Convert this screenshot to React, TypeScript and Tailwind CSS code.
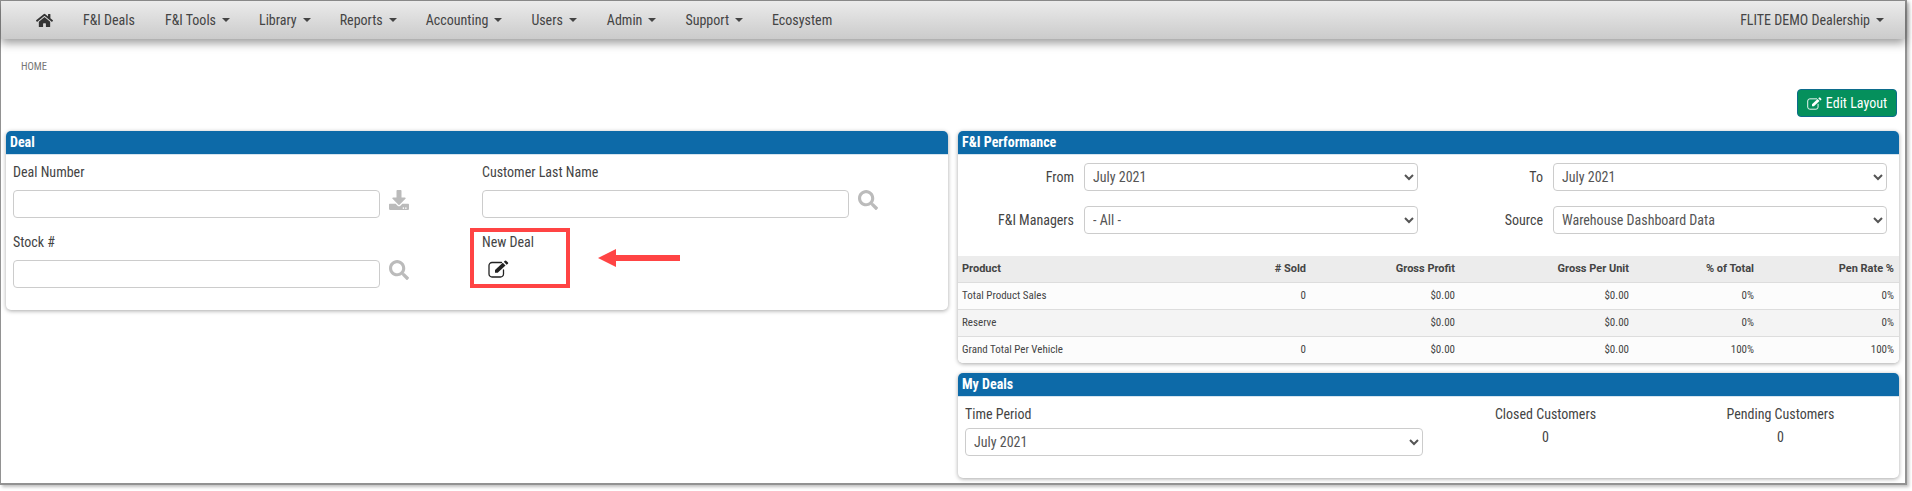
import { FaDownload, FaHome, FaSearch } from "react-icons/fa";

const navItems = [
  { label: "F&I Deals", caret: false, className: "ml-[30px]" },
  { label: "F&I Tools", caret: true, className: "ml-[30px]" },
  { label: "Library", caret: true, className: "ml-[29px]" },
  { label: "Reports", caret: true, className: "ml-[29px]" },
  { label: "Accounting", caret: true, className: "ml-[29px]" },
  { label: "Users", caret: true, className: "ml-[29px]" },
  { label: "Admin", caret: true, className: "ml-[30px]" },
  { label: "Support", caret: true, className: "ml-[29px]" },
  { label: "Ecosystem", caret: false, className: "ml-[29px]" },
];

const rows = [
  ["Total Product Sales", "0", "$0.00", "$0.00", "0%", "0%"],
  ["Reserve", "", "$0.00", "$0.00", "0%", "0%"],
  ["Grand Total Per Vehicle", "0", "$0.00", "$0.00", "100%", "100%"],
];

const tableCols = "grid grid-cols-[208px_145px_149px_174px_125px_140px] items-center";

// pencil-square outline: hollow box with a solid pencil across the corner
function EditIcon({ className }: { className?: string }) {
  return (
    <svg className={className} viewBox="0 0 21 18" fill="none">
      <path d="M15.5 10V14a3 3 0 0 1-3 3H4a3 3 0 0 1-3-3V5.500a3 3 0 0 1 3-3h9.500" stroke="currentColor" strokeWidth="1.3" strokeLinecap="round" />
      <path d="M7 10 14.800 2.700 17.500 5.400 9.700 12.800H7Z" fill="currentColor" />
      <path d="M15.800 1.800 17 0.700a0.900 0.900 0 0 1 1.200 0L20 2.500a0.900 0.900 0 0 1 0 1.200L18.600 4.700Z" fill="currentColor" />
    </svg>
  );
}

function Caret() {
  return <span className="ml-[6px] inline-block border-x-[4px] border-t-[4px] border-x-transparent border-t-[#444]" />;
}

function Card({ title, children, className }: { title: string; children: React.ReactNode; className?: string }) {
  return (
    <section className={`overflow-hidden rounded-[5px] bg-white shadow-[0_1px_4px_rgba(0,0,0,0.35)] ${className ?? ""}`}>
      <h2 className="h-[24px] border-b border-[#d5e4ef] bg-[#0d6aa8] pl-1 text-[14px] leading-[23px] font-bold text-white">{title}</h2>
      {children}
    </section>
  );
}

function Field({ label, icon }: { label: string; icon: React.ReactNode }) {
  return (
    <div>
      <label className="block h-[20px] text-[14px] leading-[20px] text-[#444]">{label}</label>
      <div className="mt-2 flex items-start gap-[9px]">
        <input className="h-[28px] w-[367px] rounded-[4px] border border-[#ccc] bg-white" />
        {icon}
      </div>
    </div>
  );
}

function Select({ value, className }: { value: string; className: string }) {
  return (
    <select defaultValue={value} className={`h-[28px] rounded-[4px] border border-[#ccc] bg-white pl-[4px] text-[14px] text-[#555] ${className}`}>
      <option>{value}</option>
    </select>
  );
}

export default function App() {
  return (
    <div className="h-[491px] w-[1912px] overflow-hidden bg-white font-['Roboto',sans-serif] [font-stretch:85%]">
      <div className="box-border h-[485px] w-[1907px] border-t border-r-2 border-b-2 border-l border-[#929292] shadow-[2px_2px_3px_rgba(0,0,0,0.25)]">
        <nav className="relative flex h-[38px] items-center bg-gradient-to-b from-[#ebebeb] to-[#cbcbcb] pr-[21px] pl-[35px] text-[14px] text-[#444] shadow-[0_4px_9px_rgba(0,0,0,0.4)]">
          <FaHome className="size-[17px] text-[#333]" />
          {navItems.map((item) => (
            <a key={item.label} className={`flex items-center ${item.className}`}>
              {item.label}
              {item.caret && <Caret />}
            </a>
          ))}
          <a className="ml-auto flex items-center">
            FLITE DEMO Dealership
            <Caret />
          </a>
        </nav>

        <div className="pt-[20px] pl-[20px] text-[10.5px] leading-[16px] text-[#777]">HOME</div>

        <div className="mt-[14px] flex justify-end pr-[8px]">
          <button className="flex h-[28px] w-[100px] items-center justify-center gap-1 rounded-[4px] border border-[#0c6c8c] bg-[#05905c] text-[14px] text-white">
            <EditIcon className="h-[13px] w-[15px]" />
            Edit Layout
          </button>
        </div>

        <div className="mt-[14px] ml-[5px] flex items-start gap-[10px]">
          <Card title="Deal" className="w-[942px]">
            <div className="relative grid h-[155px] grid-cols-[469px_469px] content-start gap-y-[14px] pt-[7px] pl-[7px]">
              <Field label="Deal Number" icon={<FaDownload className="size-[20px] text-[#bbb]" />} />
              <Field label="Customer Last Name" icon={<FaSearch className="size-[20px] text-[#bbb]" />} />
              <Field label="Stock #" icon={<FaSearch className="size-[20px] text-[#bbb]" />} />
              <div>
                <label className="block h-[20px] text-[14px] leading-[20px] text-[#444]">New Deal</label>
                <EditIcon className="mt-2 ml-[6px] h-[18px] w-[21px] text-[#222]" />
              </div>
              <div className="absolute top-[73px] left-[464px] h-[60px] w-[100px] border-[4px] border-[#ff4444]" />
              <svg className="absolute top-[94px] left-[592px]" width="82" height="18" viewBox="0 0 82 18">
                <path d="M0 9 L18 0 V6 H82 V12 H18 V18 Z" fill="#ff4444" />
              </svg>
            </div>
          </Card>

          <div className="flex w-[941px] flex-col gap-[10px]">
            <Card title="F&I Performance">
              <div className="grid grid-cols-[470px_471px] gap-y-[15px] pt-[8px] pb-[22px]">
                <div className="flex items-center gap-[10px]">
                  <span className="w-[116px] text-right text-[14px] text-[#444]">From</span>
                  <Select value="July 2021" className="w-[334px]" />
                </div>
                <div className="flex items-center gap-[10px]">
                  <span className="w-[115px] text-right text-[14px] text-[#444]">To</span>
                  <Select value="July 2021" className="w-[334px]" />
                </div>
                <div className="flex items-center gap-[10px]">
                  <span className="w-[116px] text-right text-[14px] text-[#444]">F&amp;I Managers</span>
                  <Select value="- All -" className="w-[334px]" />
                </div>
                <div className="flex items-center gap-[10px]">
                  <span className="w-[115px] text-right text-[14px] text-[#444]">Source</span>
                  <Select value="Warehouse Dashboard Data" className="w-[334px]" />
                </div>
              </div>
              <div className={`${tableCols} h-[27px] border-b border-[#ddd] bg-[#ececec] text-[11px] font-bold text-[#444] [font-stretch:93%]`}>
                <span className="pl-[4px]">Product</span>
                {["# Sold", "Gross Profit", "Gross Per Unit", "% of Total", "Pen Rate %"].map((h) => (
                  <span key={h} className="pr-[5px] text-right">{h}</span>
                ))}
              </div>
              {rows.map((row, i) => (
                <div
                  key={row[0]}
                  className={`${tableCols} h-[27px] border-b border-[#ddd] text-[11px] text-[#444] [font-stretch:83%] last:h-[26px] last:border-b-0 ${i === 1 ? "bg-[#f4f4f4]" : "bg-[#fcfcfc]"}`}
                >
                  {row.map((cell, c) => (
                    <span key={c} className={c === 0 ? "pl-[4px]" : "pr-[5px] text-right"}>{cell}</span>
                  ))}
                </div>
              ))}
            </Card>

            <Card title="My Deals">
              <div className="grid h-[81px] grid-cols-[470px_235px_235px] pt-[7px] text-[14px] leading-[20px] text-[#444]">
                <div className="pl-[7px]">
                  <div>Time Period</div>
                  <Select value="July 2021" className="mt-[4px] w-[458px]" />
                </div>
                <div className="text-center">
                  <div>Closed Customers</div>
                  <div className="mt-[3px]">0</div>
                </div>
                <div className="text-center">
                  <div>Pending Customers</div>
                  <div className="mt-[3px]">0</div>
                </div>
              </div>
            </Card>
          </div>
        </div>
      </div>
    </div>
  );
}
